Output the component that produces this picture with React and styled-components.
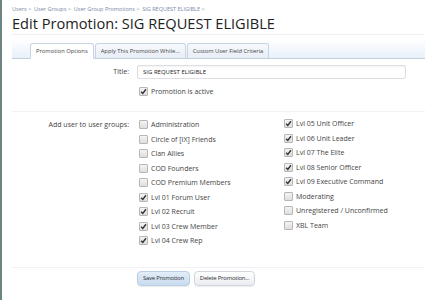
import React from "react";
import styled, { createGlobalStyle } from "styled-components";

const GlobalStyle = createGlobalStyle`
  html, body {
    margin: 0;
    padding: 0;
    background: #fff;
  }
  body {
    font-family: "Open Sans", "DejaVu Sans", sans-serif;
    color: #333;
  }
`;

const groupsLeft = [
  { name: "Administration", checked: false },
  { name: "Circle of [IX] Friends", checked: false },
  { name: "Clan Allies", checked: false },
  { name: "COD Founders", checked: false },
  { name: "COD Premium Members", checked: false },
  { name: "Lvl 01 Forum User", checked: true },
  { name: "Lvl 02 Recruit", checked: true },
  { name: "Lvl 03 Crew Member", checked: true },
  { name: "Lvl 04 Crew Rep", checked: true },
];

const groupsRight = [
  { name: "Lvl 05 Unit Officer", checked: true },
  { name: "Lvl 06 Unit Leader", checked: true },
  { name: "Lvl 07 The Elite", checked: true },
  { name: "Lvl 08 Senior Officer", checked: true },
  { name: "Lvl 09 Executive Command", checked: true },
  { name: "Moderating", checked: false },
  { name: "Unregistered / Unconfirmed", checked: false },
  { name: "XBL Team", checked: false },
];

const Box = ({ checked }) => (
  <CheckBox>
    {checked && (
      <svg width="7" height="7" viewBox="0 0 8 8">
        <path d="M1.3 4.2 L3.2 6.3 L6.8 1.4" fill="none" stroke="#333" strokeWidth="1.6" />
      </svg>
    )}
  </CheckBox>
);

const Check = ({ name, checked }) => (
  <CheckRow>
    <Box checked={checked} />
    <span>{name}</span>
  </CheckRow>
);

export default function App() {
  return (
    <>
      <GlobalStyle />
      <Page>
        <Content>
          <Crumbs>
            Users &gt; &nbsp;User Groups &gt; &nbsp;User Group Promotions &gt; &nbsp;SIG REQUEST ELIGIBLE &gt;
          </Crumbs>
          <Heading>Edit Promotion: SIG REQUEST ELIGIBLE</Heading>
          <TabBar>
            <Tab active>Promotion Options</Tab>
            <Tab>Apply This Promotion While...</Tab>
            <Tab>Custom User Field Criteria</Tab>
          </TabBar>
          <FormRow>
            <Label>Title:</Label>
            <TextInput value="SIG REQUEST ELIGIBLE" readOnly />
          </FormRow>
          <FormRow gap="5px">
            <Label />
            <Check name="Promotion is active" checked />
          </FormRow>
          <Divider />
          <FormRow>
            <Label>Add user to user groups:</Label>
            <Columns>
              <Column>
                {groupsLeft.map((g) => (
                  <Check key={g.name} {...g} />
                ))}
              </Column>
              <Column shift>
                {groupsRight.map((g) => (
                  <Check key={g.name} {...g} />
                ))}
              </Column>
            </Columns>
          </FormRow>
          <Divider bottom />
          <FormRow gap="3px">
            <Label />
            <Buttons>
              <Button primary>Save Promotion</Button>
              <Button>Delete Promotion...</Button>
            </Buttons>
          </FormRow>
        </Content>
      </Page>
    </>
  );
}

const Page = styled.div`
  width: 433px;
  height: 300px;
  border-left: 2px solid #6e8480;
  box-sizing: border-box;
  overflow: hidden;
  background: #fff;
`;

const Content = styled.div`
  padding: 0 8px 0 10px;
`;

const Crumbs = styled.div`
  font-size: 5.5px;
  color: #7a8aa6;
  padding-top: 5px;
  height: 10px;
  line-height: 8px;
  white-space: nowrap;
`;

const Heading = styled.h1`
  margin: 0;
  font-family: "Open Sans", "DejaVu Sans", sans-serif;
  font-weight: 400;
  font-size: 14.6px;
  line-height: 16px;
  color: #222;
  padding-bottom: 3px;
  border-bottom: 1px solid #eef0f3;
  white-space: nowrap;
`;

const TabBar = styled.div`
  margin-top: 4px;
  height: 19px;
  display: flex;
  align-items: flex-end;
  padding-left: 18px;
  background: linear-gradient(to bottom, #ffffff 0%, #e9f0fa 100%);
  border-bottom: 1px solid #c3cfdf;
`;

const Tab = styled.div`
  font-size: 5.8px;
  height: 14px;
  line-height: 14px;
  padding: 0 5px;
  margin-right: 1px;
  margin-bottom: -1px;
  border: 1px solid #c9d5e4;
  border-bottom: ${(p) => (p.active ? "1px solid #fff" : "1px solid #c3cfdf")};
  border-radius: 3px 3px 0 0;
  color: #444;
  white-space: nowrap;
  background: ${(p) =>
    p.active ? "#fff" : "linear-gradient(to bottom, #f7f9fc 0%, #e8eef7 100%)"};
`;

const FormRow = styled.div`
  display: flex;
  align-items: flex-start;
  margin-top: ${(p) => p.gap || "6px"};
`;

const Label = styled.div`
  width: 117px;
  flex-shrink: 0;
  text-align: right;
  font-size: 7px;
  color: #444;
  padding-right: 8px;
  line-height: 14px;
  white-space: nowrap;
`;

const TextInput = styled.input`
  width: 269px;
  height: 14px;
  box-sizing: border-box;
  border: 1px solid #dcdfe3;
  border-radius: 2px;
  font-family: "Open Sans", "DejaVu Sans", sans-serif;
  font-size: 6px;
  color: #222;
  padding: 0 5px;
  outline: none;
  box-shadow: inset 0 1px 2px rgba(0, 0, 0, 0.05);
`;

const CheckRow = styled.label`
  display: flex;
  align-items: center;
  height: 14.5px;
  gap: 3px;
  font-size: 7px;
  color: #444;
  white-space: nowrap;
  padding-left: 2px;
`;

const CheckBox = styled.span`
  width: 7px;
  height: 7px;
  border: 1px solid #b7b7b7;
  border-radius: 1px;
  background: linear-gradient(to bottom, #f4f4f4, #dedede);
  display: flex;
  align-items: center;
  justify-content: center;
  flex-shrink: 0;
`;

const Divider = styled.div`
  height: 1px;
  background: #f0f2f5;
  margin-top: ${(p) => (p.bottom ? "19px" : "12px")};
`;

const Columns = styled.div`
  display: flex;
`;

const Column = styled.div`
  width: 145px;
  display: flex;
  flex-direction: column;
  margin-top: ${(p) => (p.shift ? "-1px" : "0")};
`;

const Buttons = styled.div`
  display: flex;
  gap: 4px;
`;

const Button = styled.div`
  height: 13px;
  line-height: 13px;
  padding: 0 5px;
  font-size: 6px;
  letter-spacing: -0.25px;
  color: #333;
  border: 1px solid ${(p) => (p.primary ? "#b9cde4" : "#d2d6dc")};
  border-radius: 4px;
  background: ${(p) =>
    p.primary
      ? "linear-gradient(to bottom, #e3edf8 0%, #c8dbef 100%)"
      : "linear-gradient(to bottom, #ffffff 0%, #e9ecf1 100%)"};
  box-shadow: 0 1px 1px rgba(0, 0, 0, 0.08);
  white-space: nowrap;
`;
